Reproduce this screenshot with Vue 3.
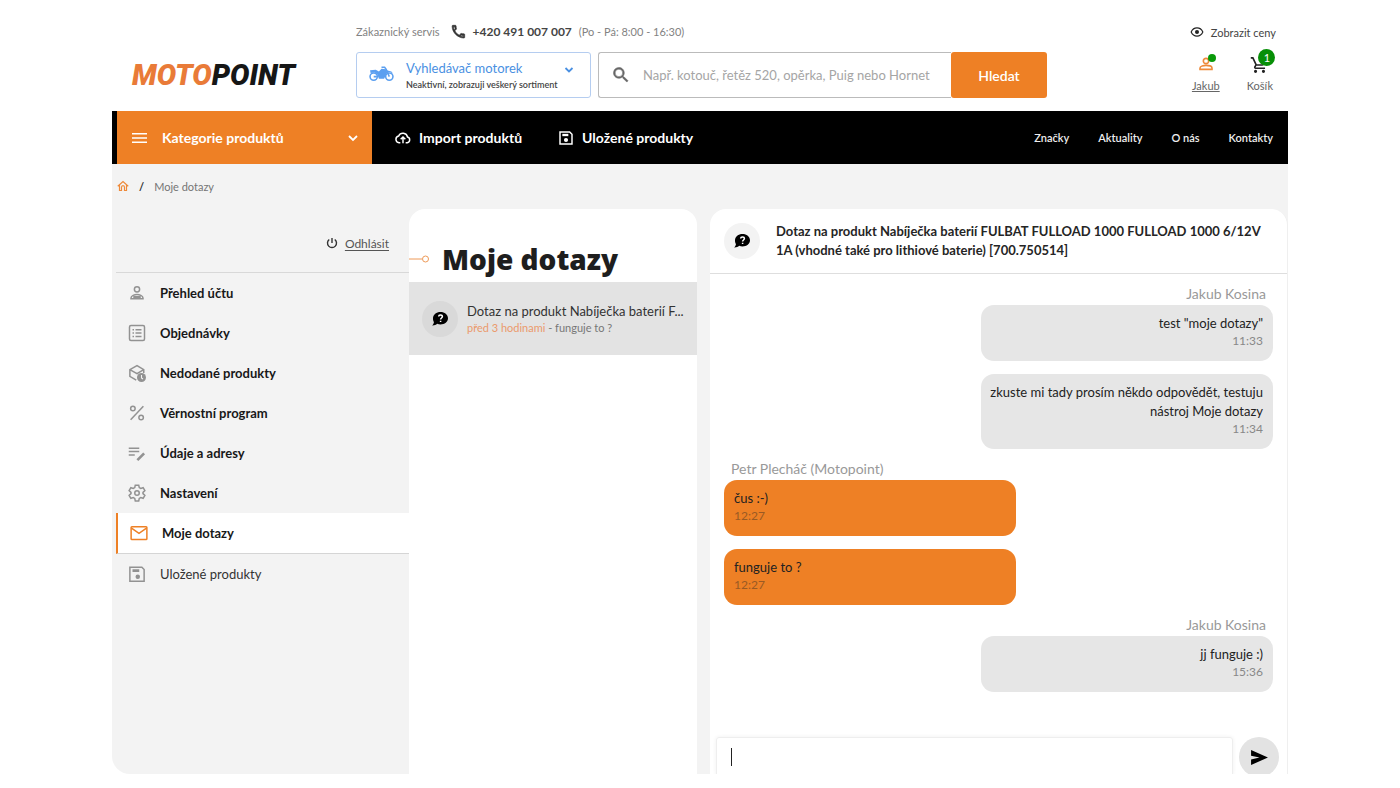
<script setup>
import { ref } from 'vue'

const query = ref('')
const draft = ref('')

const pages = ['Značky', 'Aktuality', 'O nás', 'Kontakty']

const account = [
  { label: 'Přehled účtu', icon: 'user' },
  { label: 'Objednávky', icon: 'list' },
  { label: 'Nedodané produkty', icon: 'box' },
  { label: 'Věrnostní program', icon: 'percent' },
  { label: 'Údaje a adresy', icon: 'edit' },
  { label: 'Nastavení', icon: 'gear' },
  { label: 'Moje dotazy', icon: 'mail', active: true },
  { label: 'Uložené produkty', icon: 'save', light: true }
]

const groups = [
  {
    author: 'Jakub Kosina',
    mine: true,
    messages: [
      { text: 'test "moje dotazy"', time: '11:33' },
      { text: 'zkuste mi tady prosím někdo odpovědět, testuju nástroj Moje dotazy', time: '11:34' }
    ]
  },
  {
    author: 'Petr Plecháč (Motopoint)',
    mine: false,
    messages: [
      { text: 'čus :-)', time: '12:27' },
      { text: 'funguje to ?', time: '12:27' }
    ]
  },
  {
    author: 'Jakub Kosina',
    mine: true,
    messages: [{ text: 'jj funguje :)', time: '15:36' }]
  }
]
</script>

<template>
  <div class="page">
    <header class="header">
      <a href="#" class="logo"><span>MOTO</span>POINT</a>

      <div class="center">
        <div class="service">
          <span>Zákaznický servis</span>
          <svg class="phone" viewBox="0 0 24 24"><path fill="currentColor" stroke="currentColor" d="M4.2 2h3.900c.6 0 1 .4 1 1 0 1.400.2 2.600.6 3.800.1.400 0 .8-.3 1.100L7.300 10.200c1.500 3 3.600 5.200 6.500 6.500l2.300-2.200c.3-.3.7-.4 1.100-.3 1.200.4 2.500.6 3.800.6.600 0 1 .4 1 1V20c0 .6-.4 1-1 1C11.600 21 3.200 12.800 3.200 3c0-.6.4-1 1-1zm.9 2c.1 1.600.5 3.100 1 4.600L7.600 7c-.3-1-.4-2-.5-3zM17 16.900l-1.600 1.500c1.500.4 3 .7 4.600.8v-1.800c-1 0-2-.2-3-.5z"/></svg>
          <b>+420 491 007 007</b>
          <span>(Po - Pá: 8:00 - 16:30)</span>
        </div>
        <div class="tools">
          <button class="finder" type="button">
            <svg class="moto" viewBox="0 0 48 30">
              <g fill="none" stroke="currentColor" stroke-width="3"><circle cx="9" cy="20" r="7"/><circle cx="39" cy="20" r="7"/><path d="M24 2h6l3 4 6 14M9 20h6"/></g>
              <path fill="currentColor" d="M2 8l11-1 6 3 5-5 9 1 2 6-6 12H19l-3-8-5-4-8 1zM34 8l9 2 3 4-6-3-5 1z"/>
            </svg>
            <span class="finder-text"><span class="finder-title">Vyhledávač motorek</span><small>Neaktivní, zobrazuji veškerý sortiment</small></span>
            <svg class="chevron" viewBox="0 0 12 12"><path d="M2.500 4L6 7.500 9.500 4" fill="none" stroke="currentColor" stroke-width="1.800"/></svg>
          </button>
          <form class="search" @submit.prevent>
            <label class="field">
              <svg viewBox="0 0 24 24"><path fill="currentColor" stroke="currentColor" stroke-width=".6" d="M15.500 14h-.8l-.3-.3A6.500 6.500 0 1 0 13.700 14.400l.3.3v.8l5 5 1.500-1.500zm-6 0a4.500 4.500 0 1 1 0-9 4.500 4.500 0 0 1 0 9z"/></svg>
              <input v-model="query" type="text" aria-label="Hledat produkt" placeholder="Např. kotouč, řetěz 520, opěrka, Puig nebo Hornet">
            </label>
            <button type="submit">Hledat</button>
          </form>
        </div>
      </div>

      <div class="user">
        <a href="#" class="prices">
          <svg viewBox="0 0 24 24"><path d="M2 12c2-4.500 5.600-7 10-7s8 2.500 10 7c-2 4.500-5.600 7-10 7s-8-2.500-10-7z" fill="none" stroke="currentColor" stroke-width="2"/><circle cx="12" cy="12" r="3.500" fill="currentColor"/></svg>
          Zobrazit ceny
        </a>
        <div class="shortcuts">
          <a href="#" class="shortcut me">
            <span class="glyph">
              <svg viewBox="0 0 24 24" fill="none" stroke="currentColor" stroke-width="2.400"><circle cx="12" cy="7.500" r="4"/><path d="M3 20v-2c0-3 6-4 9-4s9 1 9 4v2z"/></svg>
              <i class="dot"></i>
            </span>
            <u>Jakub</u>
          </a>
          <a href="#" class="shortcut cart">
            <span class="glyph">
              <svg viewBox="0 0 24 24"><path fill="currentColor" d="M15.600 13c.7 0 1.400-.4 1.700-1L21 5.500 19.200 4.500 15.600 11h-7L4.300 2H1v2h2l3.600 7.600L5.200 14c-.7 1.300.2 3 1.800 3h12v-2H7l1.100-2zM7 18a2 2 0 1 0 0 4 2 2 0 0 0 0-4zm10 0a2 2 0 1 0 0 4 2 2 0 0 0 0-4z"/></svg>
              <i class="count">1</i>
            </span>
            Košík
          </a>
        </div>
      </div>
    </header>

    <nav class="nav">
      <button class="categories" type="button">
        <svg class="burger" viewBox="0 0 16 12"><path d="M0 1.500h16M0 6h16M0 10.500h16" stroke="currentColor" stroke-width="1.600"/></svg>
        <span>Kategorie produktů</span>
        <svg class="chevron" viewBox="0 0 12 12"><path d="M2 4l4 4 4-4" fill="none" stroke="currentColor" stroke-width="1.800"/></svg>
      </button>
      <a href="#" class="main-link">
        <svg viewBox="0 0 24 24" fill="none" stroke="currentColor" stroke-width="2.200"><path d="M8 19H6a5 5 0 0 1-.5-9.900 7 7 0 0 1 13.300 1.500A4.300 4.300 0 0 1 18.500 19H16M12 20v-9M8.500 14L12 10.500 15.500 14"/></svg>
        Import produktů
      </a>
      <a href="#" class="main-link">
        <svg viewBox="0 0 24 24" fill="none" stroke="currentColor" stroke-width="2.200"><path d="M3 3h14.500L21 6.500V21H3z"/><path d="M6.500 7.500h9" stroke-width="3.500"/><circle cx="12" cy="15" r="2" fill="currentColor"/></svg>
        Uložené produkty
      </a>
      <div class="pages"><a v-for="p in pages" :key="p" href="#">{{ p }}</a></div>
    </nav>

    <div class="body">
      <div class="crumbs">
        <a href="#" aria-label="Domů"><svg viewBox="0 0 24 24" fill="none" stroke="currentColor" stroke-width="2.400"><path d="M1.500 12.500L12 3l10.500 9.500M5 10v11h4v-6.500a3 3 0 0 1 6 0V21h4V10M9.500 11.500h5"/></svg></a>
        <b>/</b>
        <span>Moje dotazy</span>
      </div>

      <main class="columns">
        <aside class="sidebar">
          <div class="logout">
            <svg viewBox="0 0 24 24" fill="none" stroke="currentColor" stroke-width="2.800"><path d="M12 2v10M6.500 5a9 9 0 1 0 11 0"/></svg>
            <a href="#">Odhlásit</a>
          </div>
          <ul>
            <li v-for="item in account" :key="item.label">
              <a href="#" :class="{ active: item.active, light: item.light }">
                <svg viewBox="0 0 24 24" fill="none" stroke="currentColor" stroke-width="2">
                  <g v-if="item.icon === 'user'"><circle cx="12" cy="7" r="3.500"/><path d="M4 19.500v-1c0-3 5-4.500 8-4.500s8 1.500 8 4.500v1z"/><path d="M7 17.500h10" stroke-width="3"/></g>
                  <g v-else-if="item.icon === 'list'"><rect x="2" y="2" width="20" height="20" rx="2"/><path d="M6 7.500h2M10 7.500h8M6 12h2M10 12h8M6 16.500h2M10 16.500h8"/></g>
                  <g v-else-if="item.icon === 'box'"><path d="M11 21.500L2.500 16.500v-9L12 2l9 5.500V12M2.500 7.500L12 13l9-5.500"/><circle cx="18" cy="18" r="6" fill="currentColor" stroke="none"/><path d="M18 14.500V18.500l2 1.500" stroke="#f3f3f3" stroke-width="1.400"/></g>
                  <g v-else-if="item.icon === 'percent'"><circle cx="6.500" cy="6" r="3"/><circle cx="17.500" cy="18" r="3"/><path d="M20.500 3L3.500 21"/></g>
                  <g v-else-if="item.icon === 'edit'"><path d="M1 5.500h14M1 10h14M1 14.500h8"/><path d="M12.500 21.500l9-9" stroke-width="3.500"/></g>
                  <g v-else-if="item.icon === 'gear'"><circle cx="12" cy="12" r="3"/><path d="M9.700 1.500h4.600l.7 3.300 2 1.200 3.200-1.100 2.300 4-2.500 2.200v1.800l2.500 2.200-2.300 4-3.200-1.100-2 1.200-.7 3.300H9.700L9 19.200 7 18l-3.200 1.100-2.300-4L4 12.900v-1.800L1.500 8.900l2.300-4L7 6l2-1.200z"/></g>
                  <g v-else-if="item.icon === 'mail'"><rect x="1.500" y="3.500" width="21" height="17" rx="1"/><path d="M2 5.500l10 7 10-7"/></g>
                  <g v-else><path d="M2.500 3h16L21.500 6v15.500h-19z"/><path d="M6 7.500h9" stroke-width="3.500"/><circle cx="13" cy="15.500" r="2" fill="currentColor"/></g>
                </svg>
                <span>{{ item.label }}</span>
              </a>
            </li>
          </ul>
        </aside>

        <section class="threads">
          <div class="heading">
            <svg viewBox="0 0 20 8" fill="none" stroke="currentColor"><path d="M0 4h13"/><circle cx="16.500" cy="4" r="3"/></svg>
            <h1>Moje dotazy</h1>
          </div>
          <a href="#" class="thread">
            <span class="avatar"><svg viewBox="0 0 16 14"><path d="M8.500 0C12.600 0 16 2.700 16 6.200s-3.400 6.200-7.500 6.200c-1.200 0-2.300-.2-3.300-.6C4 12.800 2 13.600.2 13.400c1-1 1.700-2.200 1.700-3.200A6 6 0 0 1 1 6.200C1 2.700 4.400 0 8.500 0z"/><path class="mark" d="M6.700 4.600c0-2.300 3.700-2.300 3.700 0 0 1.400-1.800 1.400-1.800 2.900M8.600 8.700v1.400"/></svg></span>
            <span class="thread-text">
              <span class="thread-title">Dotaz na produkt Nabíječka baterií F...</span>
              <span class="thread-meta"><em>před 3 hodinami</em> - funguje to ?</span>
            </span>
          </a>
        </section>

        <section class="chat">
          <div class="chat-head">
            <span class="avatar"><svg viewBox="0 0 16 14"><path d="M8.500 0C12.600 0 16 2.700 16 6.200s-3.400 6.200-7.500 6.200c-1.200 0-2.300-.2-3.300-.6C4 12.800 2 13.600.2 13.400c1-1 1.700-2.200 1.700-3.200A6 6 0 0 1 1 6.200C1 2.700 4.400 0 8.500 0z"/><path class="mark" d="M6.700 4.600c0-2.300 3.700-2.300 3.700 0 0 1.400-1.800 1.400-1.800 2.900M8.600 8.700v1.400"/></svg></span>
            <h2>Dotaz na produkt Nabíječka baterií FULBAT FULLOAD 1000 FULLOAD 1000 6/12V 1A (vhodné také pro lithiové baterie) [700.750514]</h2>
          </div>
          <div class="log">
            <div v-for="(g, i) in groups" :key="i" class="group" :class="{ mine: g.mine }">
              <div class="author">{{ g.author }}</div>
              <div v-for="m in g.messages" :key="m.text" class="bubble">
                <p>{{ m.text }}</p>
                <time>{{ m.time }}</time>
              </div>
            </div>
          </div>
          <form class="composer" @submit.prevent>
            <div class="draft">
              <i class="caret"></i>
              <input v-model="draft" type="text" aria-label="Zpráva">
            </div>
            <button type="submit" aria-label="Odeslat"><svg viewBox="0 0 18 16"><path d="M0 0l18 8L0 16v-6l9-2-9-2z"/></svg></button>
          </form>
        </section>
      </main>
    </div>
  </div>
</template>

<style>
body { margin: 0; background: #fff; }
</style>

<style scoped>
* { box-sizing: border-box; }
.page { width: 84%; height: calc(100vh - 14px); margin: 0 auto; display: flex; flex-direction: column; overflow: hidden; font-family: Lato, "Open Sans", sans-serif; font-size: 13px; color: #222; }
a { color: inherit; text-decoration: none; }
button { border: 0; padding: 0; font: inherit; cursor: pointer; }
input { font: inherit; border: 0; outline: 0; background: none; min-width: 0; padding: 0; }
svg { flex: none; display: block; }
.chevron { width: 12px; height: 12px; }

.header { display: flex; height: 111px; padding: 24px 12px 0 20px; }
.logo { width: 224px; padding-top: 34px; font: italic 900 29px/34px Roboto, sans-serif; color: #161616; }
.logo span { color: #e97b38; }
.center { flex: 0 1 691px; }
.service { display: flex; align-items: center; height: 16px; font-size: 11px; line-height: 16px; color: #828282; }
.service b { margin-right: 7px; font-size: 12px; font-weight: 700; color: #444; }
.phone { width: 16px; height: 16px; margin: 0 7px 0 10px; color: #333; }
.tools { display: flex; gap: 7px; margin-top: 12px; height: 46px; }
.finder { display: flex; width: 235px; padding: 6px 15px 0 12px; background: #fff; border: 1px solid #b5cdf0; border-radius: 3px; text-align: left; color: #4a90e2; }
.moto { width: 25px; height: 16px; margin: 7px 12px 0 0; color: #5b9ff0; }
.finder-text { display: flex; flex-direction: column; flex: 1; }
.finder-title { font-size: 13px; line-height: 19px; }
.finder small { font-size: 9px; line-height: 14px; font-weight: 600; color: #444; white-space: nowrap; margin-right: -20px; }
.finder .chevron { margin-top: 5px; }
.search { display: flex; flex: 1; }
.field { flex: 1; display: flex; align-items: center; padding-left: 12px; border: 1px solid #bbb; border-right: 0; border-radius: 3px 0 0 3px; color: #666; }
.field svg { width: 20px; height: 20px; margin-right: 12px; }
.field input { flex: 1; font-size: 13px; }
.field input::placeholder { color: #a5a5a5; opacity: 1; }
.search button { width: 96px; border-radius: 3px; background: #ee8025; color: #fff; font-size: 14px; font-weight: 600; }
.user { margin-left: auto; display: flex; flex-direction: column; }
.prices { display: flex; align-items: center; gap: 7px; height: 16px; font-size: 11px; color: #444; }
.prices svg { width: 14px; height: 14px; color: #222; }
.shortcuts { display: flex; justify-content: flex-end; gap: 27px; margin: 15px 3px 0 0; }
.shortcut { display: flex; flex-direction: column; align-items: center; font-size: 11px; line-height: 16px; color: #666; }
.glyph { position: relative; height: 23px; }
.me svg { width: 16px; height: 18px; color: #ee8a3a; }
.cart svg { width: 19px; height: 20px; color: #222; }
.dot { position: absolute; right: -2px; top: -1px; width: 8px; height: 8px; border-radius: 50%; background: #0a9a0a; }
.count { position: absolute; left: 8px; top: -6px; width: 17px; height: 17px; border-radius: 50%; background: #078f07; color: #fff; font: 400 11px/17px Lato, sans-serif; text-align: center; }

.nav { display: flex; align-items: center; height: 53px; padding: 0 15px 0 5px; background: #000; color: #fff; flex: none; }
.categories { display: flex; align-items: center; gap: 15px; align-self: stretch; width: 255px; padding: 0 13px 0 15px; margin-right: 23px; background: #ee8025; color: #fff; font-size: 14px; font-weight: 700; }
.categories span { margin-right: auto; }
.burger { width: 15px; height: 12px; }
.main-link { display: flex; align-items: center; gap: 8px; margin-right: 36px; font-size: 14px; font-weight: 700; }
.main-link svg { width: 16px; height: 16px; }
.pages { display: flex; gap: 29px; margin-left: auto; font-size: 11px; font-weight: 600; color: #eee; }

.body { flex: 1; min-height: 0; display: flex; flex-direction: column; background: #f3f3f3; border-bottom-left-radius: 18px; overflow: hidden; }
.crumbs { flex: none; display: flex; align-items: center; gap: 10px; height: 44px; margin-bottom: 1px; padding-left: 5px; font-size: 11px; color: #757575; }
.crumbs svg { width: 12px; height: 12px; color: #ee8a3a; }
.crumbs b { color: #333; }
.columns { flex: 1; min-height: 0; display: grid; grid-template-columns: minmax(0, 297fr) minmax(0, 288fr) minmax(0, 591fr); }

.logout { display: flex; align-items: center; justify-content: flex-end; gap: 7px; height: 64px; margin-left: 4px; padding: 5px 20px 0 0; border-bottom: 1px solid #d8d8d8; font-size: 12px; line-height: 17px; color: #555; }
.logout a { text-decoration: underline; text-underline-offset: 2px; }
.logout svg { width: 12px; height: 12px; color: #333; }
ul { list-style: none; margin: 0 0 0 4px; padding: 0; }
li a { display: flex; align-items: center; height: 40px; padding-left: 12px; font-weight: 700; color: #181818; }
li svg { width: 18px; height: 18px; margin-right: 14px; color: #929292; }
li .light { font-weight: 400; color: #333; }
li .active { height: 41px; background: #fff; border-left: 2px solid #ee8025; border-bottom: 1px solid #d5d5d5; }
li .active svg { color: #ee8025; }

.threads { background: #fff; border-radius: 16px 16px 0 0; }
.heading { display: flex; align-items: center; gap: 13px; height: 73px; padding-top: 26px; color: #ee9a58; }
.heading svg { width: 20px; height: 8px; }
h1 { margin: 0; font-family: "Open Sans", sans-serif; font-size: 28px; line-height: 40px; font-weight: 800; color: #1e1e1e; }
.thread { display: flex; align-items: center; gap: 9px; height: 73px; padding: 0 8px 0 13px; background: #e3e3e3; }
.avatar { flex: none; display: grid; place-items: center; width: 36px; height: 36px; border-radius: 50%; background: #d9d9d9; }
.avatar svg { width: 16px; height: 14px; }
.mark { fill: none; stroke: #fff; stroke-width: 1.5; }
.thread-text { min-width: 0; display: flex; flex-direction: column; }
.thread-title { overflow: hidden; text-overflow: ellipsis; white-space: nowrap; line-height: 18px; color: #333; }
.thread-meta { font-size: 11px; line-height: 15px; color: #777; }
.thread-meta em { font-style: normal; color: #eb9a6c; }

.chat { min-height: 0; display: flex; flex-direction: column; margin-left: 13px; background: #fff; border: solid #efefef; border-width: 0 1px 0 0; border-radius: 16px 16px 0 0; }
.chat-head { flex: none; display: flex; align-items: center; gap: 16px; height: 65px; padding: 0 14px; border-bottom: 1px solid #dedede; }
.chat-head .avatar { background: #f3f3f3; }
h2 { margin: 0; font-size: 13px; line-height: 19px; font-weight: 700; color: #252525; }
.log { flex: 1; padding: 11px 14px 0; }
.group { display: flex; flex-direction: column; align-items: flex-start; gap: 13px; margin-bottom: 11px; }
.author { height: 18px; margin-bottom: -11px; padding: 0 7px; font-size: 14px; line-height: 18px; color: #999; }
.bubble { width: 292px; max-width: 100%; padding: 9px 10px 12px; border-radius: 13px; background: #ee8025; }
.bubble p { margin: 0; line-height: 19px; color: #222; }
.bubble time { display: block; font-size: 12px; line-height: 16px; color: #9a5a24; }
.mine { align-items: flex-end; text-align: right; }
.mine .bubble { padding-left: 4px; background: #e6e6e6; }
.mine time { color: #888; }
.composer { flex: none; display: flex; align-items: flex-start; gap: 6px; height: 37px; padding: 0 8px 0 6px; }
.draft { flex: 1; display: flex; align-items: center; height: 40px; padding-left: 14px; border: 1px solid #eee; box-shadow: 0 0 4px #f0f0f0; border-radius: 3px; }
.draft input { flex: 1; }
.caret { width: 1px; height: 18px; background: #222; }
.composer button { flex: none; display: grid; place-items: center; width: 40px; height: 40px; border-radius: 50%; background: #e3e3e3; color: #111; }
.composer svg { width: 17px; height: 15px; }
</style>
